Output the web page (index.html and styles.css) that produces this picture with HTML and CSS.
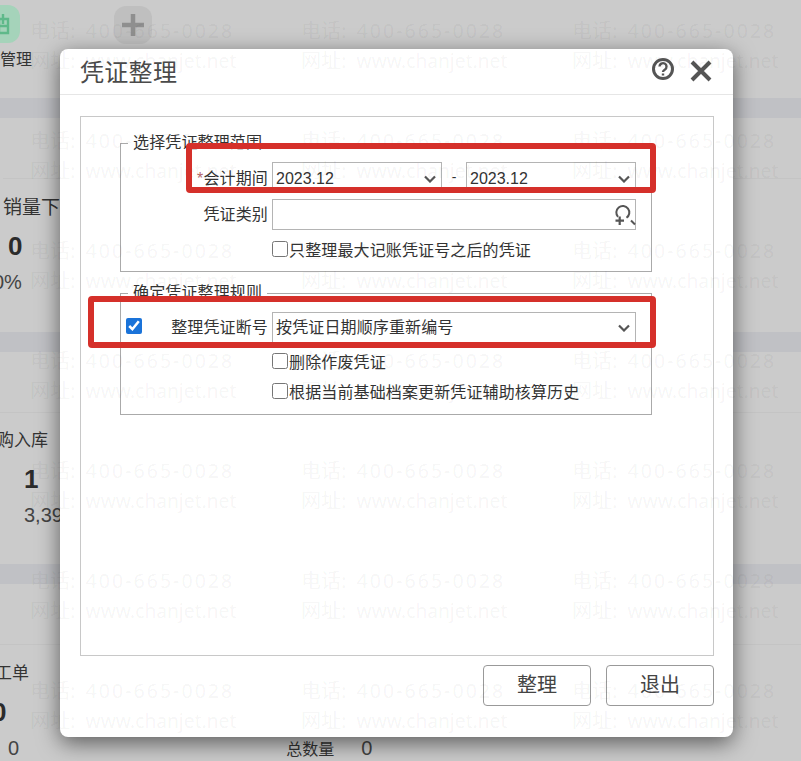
FILE: index.html
```html
<!DOCTYPE html>
<html lang="zh-CN">
<head>
    <meta charset="UTF-8">
    <meta name="viewport" content="width=device-width, initial-scale=1.0">
    <title>凭证整理</title>
    <link rel="stylesheet" href="styles.css">
</head>
<body>
    <div class="page">
        <div class="section section-top">
            <div class="tiles">
                <div class="tile tile-green">
                    <svg width="24" height="26" viewBox="0 0 24 26" fill="none" stroke="#5fb98a" stroke-width="2.400">
                        <path d="M3 8h18v14H3zM8 3v10M16 3v10M3 15h18M12 8v14"/>
                    </svg>
                </div>
                <div class="tile tile-plus">
                    <svg width="24" height="24" viewBox="0 0 24 24" stroke="#8f8f8f" stroke-width="4.500">
                        <path d="M12 1v22M1 12h22"/>
                    </svg>
                </div>
            </div>
            <div class="tile-name">管理</div>
        </div>
        <div class="band"></div>
        <div class="section section-sales">
            <div class="rule"></div>
            <div class="stat-name">销量下滑</div>
            <div class="stat-big">0</div>
            <div class="stat-small stat-percent">0%</div>
        </div>
        <div class="band"></div>
        <div class="section section-stock">
            <div class="rule"></div>
            <div class="stat-name stat-stock">采购入库</div>
            <div class="stat-big">1</div>
            <div class="stat-small">3,39</div>
        </div>
        <div class="band"></div>
        <div class="section section-work">
            <div class="rule"></div>
            <div class="stat-name stat-work">工单</div>
            <div class="stat-big stat-cut">0</div>
            <div class="total-row">
                <span class="stat-small">0</span>
                <span class="total-name">总数量</span>
                <span class="stat-small">0</span>
            </div>
        </div>
    </div>

    <div class="dialog">
        <div class="dialog-head">
            <h1>凭证整理</h1>
            <div class="head-icons">
                <svg class="help" width="24" height="24" viewBox="0 0 24 24" fill="none" stroke="#555" stroke-width="3">
                    <circle cx="12" cy="12" r="9.500"/>
                    <path d="M8.500 9.500a3.500 3.500 0 1 1 5.500 3c-1.300.8-2 1.300-2 2.500" stroke-width="2.400"/>
                    <path d="M12 16.500v2" stroke-width="2.400"/>
                </svg>
                <svg width="22" height="22" viewBox="0 0 22 22" fill="none" stroke="#555" stroke-width="4">
                    <path d="M2 2l18 18M20 2L2 20"/>
                </svg>
            </div>
        </div>
        <div class="dialog-body">
            <div class="panel">
                <fieldset class="group group-range">
                    <legend>选择凭证整理范围</legend>
                    <div class="form-row">
                        <label class="field-name"><span class="required">*</span>会计期间</label>
                        <div class="period">
                            <div class="select">
                                <span>2023.12</span>
                                <svg class="chevron" width="12" height="8" viewBox="0 0 12 8" fill="none" stroke="#555" stroke-width="2.200"><path d="M1 1.500l5 5 5-5"/></svg>
                            </div>
                            <span class="dash">-</span>
                            <div class="select">
                                <span>2023.12</span>
                                <svg class="chevron" width="12" height="8" viewBox="0 0 12 8" fill="none" stroke="#555" stroke-width="2.200"><path d="M1 1.500l5 5 5-5"/></svg>
                            </div>
                        </div>
                    </div>
                    <div class="form-row row-type">
                        <label class="field-name">凭证类别</label>
                        <div class="select select-tall">
                            <span></span>
                            <svg class="lookup" width="24" height="22" viewBox="0 0 24 22" fill="none" stroke="#555" stroke-width="2">
                                <path d="M6 12.800A6.500 6.500 0 1 1 14.500 13.800"/>
                                <path d="M7.700 12.500v8.500M3.500 16.700h8.500" stroke-width="2.200"/>
                                <path d="M19 16.500l4 4" stroke-width="2"/>
                            </svg>
                        </div>
                    </div>
                    <div class="form-row row-check row-last">
                        <span></span>
                        <label class="check"><input type="checkbox">只整理最大记账凭证号之后的凭证</label>
                    </div>
                </fieldset>

                <fieldset class="group group-rule">
                    <legend>确定凭证整理规则</legend>
                    <div class="form-row">
                        <div class="field-name field-check">
                            <input type="checkbox" class="check-on" checked>
                            <label>整理凭证断号</label>
                        </div>
                        <div class="select select-tall">
                            <span class="select-cn">按凭证日期顺序重新编号</span>
                            <svg class="chevron" width="12" height="8" viewBox="0 0 12 8" fill="none" stroke="#555" stroke-width="2.200"><path d="M1 1.500l5 5 5-5"/></svg>
                        </div>
                    </div>
                    <div class="form-row row-check">
                        <span></span>
                        <label class="check"><input type="checkbox">删除作废凭证</label>
                    </div>
                    <div class="form-row row-check row-next">
                        <span></span>
                        <label class="check"><input type="checkbox">根据当前基础档案更新凭证辅助核算历史</label>
                    </div>
                </fieldset>
            </div>
            <div class="dialog-foot">
                <button>整理</button>
                <button>退出</button>
            </div>
        </div>
    </div>

    <div class="watermarks">
        <div class="mark"><p>电话:<span class="tel">400-665-0028</span></p><p>网址:<span class="url">www.chanjet.net</span></p></div>
        <div class="mark"><p>电话:<span class="tel">400-665-0028</span></p><p>网址:<span class="url">www.chanjet.net</span></p></div>
        <div class="mark"><p>电话:<span class="tel">400-665-0028</span></p><p>网址:<span class="url">www.chanjet.net</span></p></div>
        <div class="mark"><p>电话:<span class="tel">400-665-0028</span></p><p>网址:<span class="url">www.chanjet.net</span></p></div>
        <div class="mark"><p>电话:<span class="tel">400-665-0028</span></p><p>网址:<span class="url">www.chanjet.net</span></p></div>
        <div class="mark"><p>电话:<span class="tel">400-665-0028</span></p><p>网址:<span class="url">www.chanjet.net</span></p></div>
        <div class="mark"><p>电话:<span class="tel">400-665-0028</span></p><p>网址:<span class="url">www.chanjet.net</span></p></div>
        <div class="mark"><p>电话:<span class="tel">400-665-0028</span></p><p>网址:<span class="url">www.chanjet.net</span></p></div>
        <div class="mark"><p>电话:<span class="tel">400-665-0028</span></p><p>网址:<span class="url">www.chanjet.net</span></p></div>
        <div class="mark"><p>电话:<span class="tel">400-665-0028</span></p><p>网址:<span class="url">www.chanjet.net</span></p></div>
        <div class="mark"><p>电话:<span class="tel">400-665-0028</span></p><p>网址:<span class="url">www.chanjet.net</span></p></div>
        <div class="mark"><p>电话:<span class="tel">400-665-0028</span></p><p>网址:<span class="url">www.chanjet.net</span></p></div>
        <div class="mark"><p>电话:<span class="tel">400-665-0028</span></p><p>网址:<span class="url">www.chanjet.net</span></p></div>
        <div class="mark"><p>电话:<span class="tel">400-665-0028</span></p><p>网址:<span class="url">www.chanjet.net</span></p></div>
        <div class="mark"><p>电话:<span class="tel">400-665-0028</span></p><p>网址:<span class="url">www.chanjet.net</span></p></div>
        <div class="mark"><p>电话:<span class="tel">400-665-0028</span></p><p>网址:<span class="url">www.chanjet.net</span></p></div>
        <div class="mark"><p>电话:<span class="tel">400-665-0028</span></p><p>网址:<span class="url">www.chanjet.net</span></p></div>
        <div class="mark"><p>电话:<span class="tel">400-665-0028</span></p><p>网址:<span class="url">www.chanjet.net</span></p></div>
        <div class="mark"><p>电话:<span class="tel">400-665-0028</span></p><p>网址:<span class="url">www.chanjet.net</span></p></div>
        <div class="mark"><p>电话:<span class="tel">400-665-0028</span></p><p>网址:<span class="url">www.chanjet.net</span></p></div>
        <div class="mark"><p>电话:<span class="tel">400-665-0028</span></p><p>网址:<span class="url">www.chanjet.net</span></p></div>
    </div>

    <div class="highlight highlight-period"></div>
    <div class="highlight highlight-rule"></div>
</body>
</html>
```

FILE: styles.css
```css
* {
    box-sizing: border-box;
}

html, body {
    height: 100%;
}

body {
    margin: 0;
    position: relative;
    overflow: hidden;
    background-color: #cbcbcb;
    color: #333;
    font-family: "Liberation Sans", "Noto Sans CJK SC", sans-serif;
}

/* page behind the dialog */
.section {
    overflow: hidden;
}

.section-top {
    height: 98px;
    padding-top: 6px;
}

.section-sales {
    height: 214px;
    padding: 60px 0 0 3px;
}

.section-stock {
    height: 212px;
    padding-top: 60px;
}

.section-work {
    height: 177px;
    padding-top: 60px;
}

.rule {
    height: 1px;
    background-color: #c4c4c4;
}

.section-sales .rule {
    margin-bottom: 17px;
}

.section-stock .rule {
    margin-bottom: 16px;
}

.section-work .rule {
    margin-bottom: 17px;
}

.band {
    height: 20px;
    background-color: #c0c1c5;
}

.tiles {
    display: flex;
    align-items: flex-start;
    gap: 94px;
    margin-left: -18px;
}

.tile {
    display: flex;
    align-items: center;
    justify-content: center;
    width: 38px;
    height: 38px;
    border-radius: 12px;
}

.tile-green {
    margin-top: -1px;
    background-color: #a5d3ba;
}

.tile-green svg {
    margin-left: -4px;
}

.tile-plus {
    background-color: #bfbfbf;
}

.tile-name {
    margin-top: 6px;
    font-size: 16px;
    line-height: 20px;
}

.stat-name {
    font-size: 19px;
    line-height: 24px;
    white-space: nowrap;
}

.stat-big {
    margin-top: 12px;
    font-size: 26px;
    line-height: 28px;
    font-weight: bold;
    color: #2b2b2b;
}

.stat-small {
    font-size: 20px;
    line-height: 24px;
    color: #444;
}

.section-sales .stat-big {
    margin-left: 5px;
}

.stat-percent {
    margin: 10px 0 0 -10px;
}

.stat-stock {
    margin-left: -20px;
    font-size: 17px;
}

.section-stock .stat-big,
.section-stock .stat-small {
    margin-left: 24px;
}

.section-stock .stat-small {
    margin-top: 10px;
}

.stat-work {
    margin-left: -5px;
    font-size: 17px;
}

.stat-cut {
    margin-left: -8px;
}

.total-row {
    display: flex;
    align-items: center;
    margin: 10px 0 0 8px;
}

.total-name {
    margin: 0 27px 0 267px;
    font-size: 16px;
}

/* dialog */
.dialog {
    position: absolute;
    left: 60px;
    top: 49px;
    width: 673px;
    height: 688px;
    display: flex;
    flex-direction: column;
    background: white;
    border-radius: 8px;
    box-shadow: 0 6px 22px rgba(0, 0, 0, 0.55);
}

.dialog-head {
    display: flex;
    align-items: center;
    justify-content: space-between;
    height: 46px;
    padding: 0 21px 2px 20px;
    border-bottom: 1px solid #e6e6e6;
}

h1 {
    margin: 0;
    font-size: 24px;
    font-weight: normal;
    letter-spacing: 0.3px;
    color: #4a4a4a;
}

.head-icons {
    display: flex;
    align-items: center;
    gap: 15px;
}

.help {
    margin-top: -4px;
}

.dialog-body {
    flex: 1;
    padding: 21px 19px 0 20px;
}

.panel {
    height: 540px;
    padding: 15px 61px 0 39px;
    border: 1px solid #c8c8c8;
}

.group {
    margin: 0;
    padding: 8px 15px 0 0;
    border: 1px solid #aaa;
    min-width: 0;
}

.group legend {
    margin-left: 7px;
    padding: 0 5px;
    font-size: 16px;
    line-height: 22px;
    letter-spacing: 0.13px;
}

.group-rule {
    margin-top: 10px;
    padding-bottom: 13px;
}

.form-row {
    display: grid;
    grid-template-columns: 147px 1fr;
    column-gap: 4px;
    align-items: center;
}

.field-name {
    font-size: 16px;
    letter-spacing: 0.13px;
    text-align: right;
}

.required {
    color: #b5656a;
}

.row-type .field-name {
    padding-bottom: 3px;
}

.field-check {
    display: flex;
    justify-content: space-between;
    align-items: center;
    padding: 0 0 4px 5px;
}

.period {
    display: grid;
    grid-template-columns: 170px 1fr 170px;
    align-items: center;
}

.dash {
    text-align: center;
    font-size: 14px;
}

.select {
    display: flex;
    align-items: center;
    justify-content: space-between;
    height: 30px;
    padding: 0 4px 0 3px;
    border: 1px solid #b4b4b4;
    font-size: 16px;
}

.period .select {
    padding-top: 3px;
}

.select-tall {
    height: 31px;
}

.select-cn {
    padding-bottom: 3px;
    letter-spacing: 0.13px;
}

.select .chevron {
    margin-right: 1px;
}

.select .lookup {
    margin-right: -5px;
}

.row-type {
    margin-top: 7px;
}

.row-check {
    margin-top: 6px;
    height: 22px;
}

.group-range .row-check {
    margin-top: 7px;
}

.row-next {
    margin-top: 8px;
}

.row-last {
    margin-bottom: 12px;
}

.check {
    display: flex;
    align-items: center;
    font-size: 16px;
    letter-spacing: 0.13px;
}

input[type="checkbox"] {
    width: 16px;
    height: 16px;
    margin: 0 1px 0 0;
    accent-color: #1a73d9;
}

.dialog-foot {
    display: flex;
    justify-content: flex-end;
    gap: 15px;
    margin-top: 9px;
}

button {
    width: 108px;
    height: 41px;
    padding: 0 0 4px;
    background: transparent;
    border: 1px solid #999;
    border-radius: 4px;
    color: #444;
    font-family: inherit;
    font-size: 20px;
}

/* watermark sits over everything except the red marks */
.watermarks {
    position: absolute;
    left: 30px;
    top: 15px;
    right: 0;
    bottom: 0;
    overflow: hidden;
    display: grid;
    grid-template-columns: 271px 271px 1fr;
    grid-auto-rows: 110px;
    pointer-events: none;
}

.mark {
    color: rgba(0, 0, 0, 0.05);
    font-family: "Noto Sans CJK SC", sans-serif;
    font-size: 20px;
    line-height: 30px;
    white-space: nowrap;
}

.mark p {
    height: 30px;
    margin: 0;
}

.mark span {
    display: inline-block;
    margin-left: 10px;
    font-family: "Noto Sans", "Noto Sans CJK SC", sans-serif;
}

.mark .tel {
    letter-spacing: 2.05px;
    font-size: 19.5px;
}

.mark .url {
    font-size: 19.2px;
}

/* red annotation boxes drawn on the screenshot */
.highlight {
    position: absolute;
    border: 6px solid #d5302a;
    border-radius: 4px;
}

.highlight-period {
    left: 186px;
    top: 143px;
    width: 470px;
    height: 50px;
}

.highlight-rule {
    left: 88px;
    top: 296px;
    width: 568px;
    height: 52px;
}
```
